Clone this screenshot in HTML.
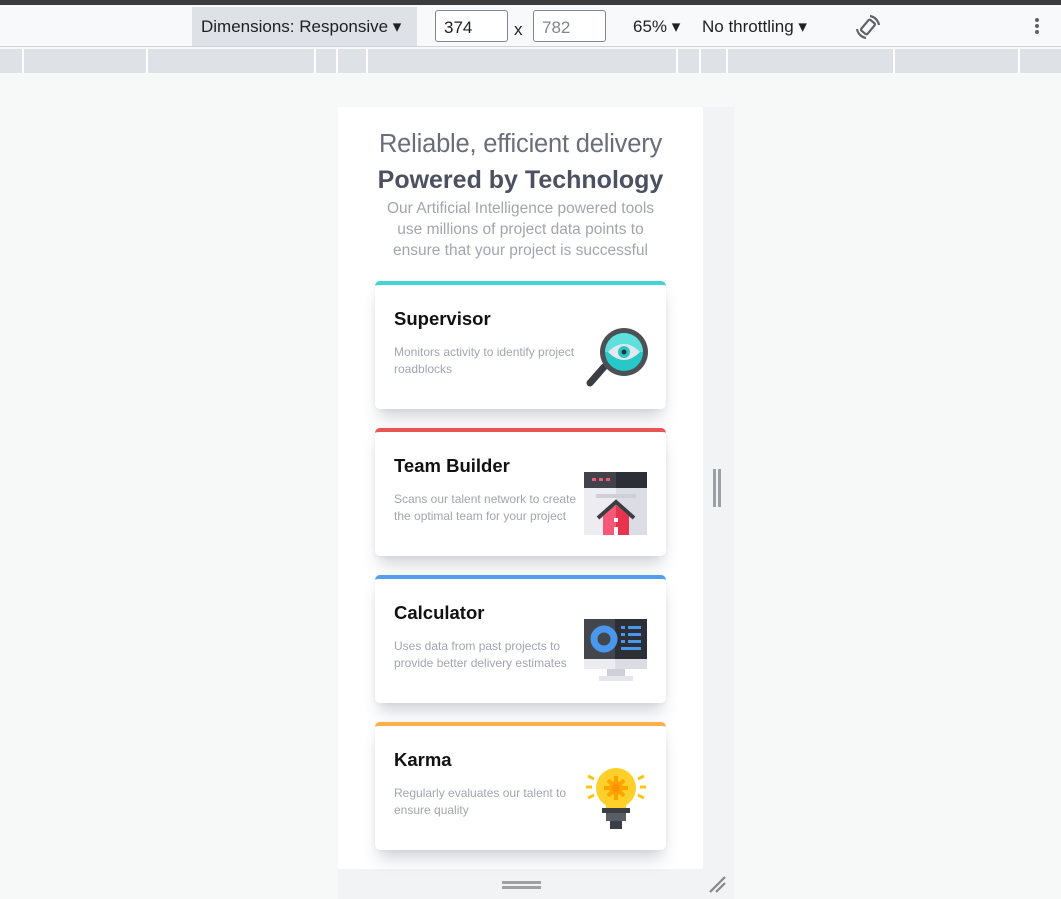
<!DOCTYPE html>
<html><head><meta charset="utf-8"><style>
*{margin:0;padding:0;box-sizing:border-box}
body{width:1061px;height:899px;overflow:hidden;background:#f7f8f8;font-family:"Liberation Sans",sans-serif;position:relative}
.topbar{position:absolute;left:0;top:0;width:1061px;height:5px;background:#3c3c3c}
.tool{position:absolute;left:0;top:5px;width:1061px;height:42px;background:#f8f9fa;border-bottom:1px solid #d0d2d6;font-size:17px;color:#202124}
.tool span{position:absolute;top:12px}
.dim{position:absolute;left:192px;top:2px;width:225px;height:39px;background:#dee1e6}
.inp{position:absolute;top:5px;height:32px;border:1px solid #80868b;border-radius:3px;background:#fff;padding:7px 8px;font-size:17px}
.ruler{position:absolute;left:0;top:49px;width:1061px;height:24px;background:#dee1e6}
.ruler i{position:absolute;top:0;width:2px;height:24px;background:#fff}
.vp{position:absolute;left:338px;top:107px;width:365px;height:762px;background:#fff}
.gut{position:absolute;left:703px;top:107px;width:31px;height:792px;background:#f1f3f4}
.bot{position:absolute;left:338px;top:869px;width:396px;height:30px;background:#f1f3f4}
.vp h2,.vp h1,.vp p.intro{position:absolute;left:0;width:365px;text-align:center;white-space:nowrap}
.vp h2{top:22px;font-weight:normal;font-size:25.5px;line-height:30px;color:#6a6d7a;letter-spacing:-.2px}
.vp h1{top:58px;font-weight:bold;font-size:25px;line-height:30px;color:#4d5061}
.vp p.intro{top:91px;font-size:15.5px;line-height:21px;color:#a3a5ae}
.card{position:absolute;left:37px;width:291px;height:128px;background:#fff;border-radius:5px;border-top:4px solid;box-shadow:0 12px 16px -4px rgba(50,55,80,.22),0 0 6px rgba(0,0,0,.05)}
.card b{position:absolute;left:19px;top:23px;font-size:18.5px;color:#111}
.card p{position:absolute;left:19px;top:59px;width:200px;font-size:12px;line-height:17px;color:#a3a5ae}
.card svg{position:absolute;left:209px;top:40px}
</style></head><body>
<div class="topbar"></div>
<div class="tool">
<div class="dim"></div>
<span style="left:201px">Dimensions: Responsive ▾</span>
<div class="inp" style="left:435px;width:73px">374</div>
<span style="left:514px;top:15px">x</span>
<div class="inp" style="left:533px;width:73px;color:#80868b">782</div>
<span style="left:633px">65% ▾</span>
<span style="left:702px">No throttling ▾</span>
<svg style="position:absolute;left:853px;top:7px" width="30" height="30" viewBox="0 0 30 30"><g fill="none" stroke="#5f6368" stroke-width="2.2"><rect x="11" y="8" width="8" height="14" rx="1.5" transform="rotate(40 15 15)"/><path d="M17 4a11 11 0 0 1 9 9M13 26a11 11 0 0 1-9-9"/></g></svg>
<div style="position:absolute;left:1035px;top:13px;width:4px;height:4px;border-radius:2px;background:#5f6368;box-shadow:0 6px 0 #5f6368,0 12px 0 #5f6368"></div>
</div>
<div class="ruler"><i style="left:22px"></i><i style="left:146px"></i><i style="left:314px"></i><i style="left:336px"></i><i style="left:366px"></i><i style="left:676px"></i><i style="left:699px"></i><i style="left:726px"></i><i style="left:893px"></i><i style="left:1018px"></i></div>
<div class="gut"><div style="position:absolute;left:10px;top:362px;width:3px;height:38px;background:#9aa0a6;box-shadow:5px 0 0 #9aa0a6;"></div></div>
<div class="bot"><div style="position:absolute;left:164px;top:12px;width:39px;height:3px;background:#a0a0a0;box-shadow:0 5px 0 #a0a0a0"></div>
<svg style="position:absolute;left:370px;top:5px" width="20" height="20"><path d="M2 18L17 3M8 18L17 9" stroke="#888" stroke-width="2.2"/></svg></div>
<div class="vp">
<h2>Reliable, efficient delivery</h2>
<h1>Powered by Technology</h1>
<p class="intro">Our Artificial Intelligence powered tools<br>use millions of project data points to<br>ensure that your project is successful</p>
<div class="card" style="top:174px;border-color:#44d3d2"><b>Supervisor</b><p>Monitors activity to identify project roadblocks</p>
<svg width="66" height="66" viewBox="0 0 66 66"><path d="M20 42L6 58" stroke="#3a3d42" stroke-width="7" stroke-linecap="round"/><circle cx="40" cy="27" r="24" fill="#4d5055"/><circle cx="40" cy="27" r="19" fill="#27c8c8"/><path d="M40 8a19 19 0 0 0-19 19h38a19 19 0 0 0-19-19z" fill="#5ee0dc"/><path d="M24 27q16-16 32 0q-16 16-32 0z" fill="#e6e6ee"/><circle cx="40" cy="27" r="6" fill="#27c8c8"/><circle cx="40" cy="27" r="2.5" fill="#333"/></svg></div>
<div class="card" style="top:321px;border-color:#ea5454"><b>Team Builder</b><p>Scans our talent network to create the optimal team for your project</p>
<svg width="66" height="66" viewBox="0 0 66 66"><rect x="0" y="0" width="63" height="63" fill="#dcdce4"/><rect x="0" y="0" width="32" height="63" fill="#ececf1"/><rect x="0" y="0" width="63" height="16" fill="#2c2f36"/><rect x="0" y="0" width="32" height="16" fill="#40434a"/><rect x="8" y="6" width="4" height="3" fill="#f05a78"/><rect x="15" y="6" width="4" height="3" fill="#f05a78"/><rect x="22" y="6" width="4" height="3" fill="#f05a78"/><rect x="12" y="22" width="40" height="4" fill="#cfcfd8"/><path d="M14 46L32 30L50 46" stroke="#3a3d42" stroke-width="4" fill="none"/><path d="M19 44L32 33L45 44V63H19z" fill="#e8334f"/><path d="M19 44L32 33V63H19z" fill="#f6587a"/><rect x="30" y="46" width="4" height="4" fill="#fff"/><rect x="30" y="55" width="4" height="8" fill="#fff"/></svg></div>
<div class="card" style="top:468px;border-color:#549ef2"><b>Calculator</b><p>Uses data from past projects to provide better delivery estimates</p>
<svg width="66" height="66" viewBox="0 0 66 66"><rect x="0" y="0" width="63" height="40" fill="#2c2f36"/><rect x="0" y="0" width="31" height="40" fill="#43464d"/><rect x="0" y="40" width="63" height="10" fill="#dcdce4"/><rect x="0" y="40" width="31" height="10" fill="#ececf1"/><rect x="23" y="50" width="18" height="7" fill="#d0d0da"/><rect x="15" y="57" width="34" height="5" fill="#e6e6ee"/><circle cx="20" cy="20" r="10" fill="none" stroke="#4a98ee" stroke-width="7"/><rect x="37" y="7" width="4" height="3" fill="#4a98ee"/><rect x="44" y="7" width="13" height="3" fill="#4a98ee"/><rect x="37" y="14" width="4" height="3" fill="#4a98ee"/><rect x="44" y="14" width="13" height="3" fill="#4a98ee"/><rect x="37" y="21" width="4" height="3" fill="#4a98ee"/><rect x="44" y="21" width="13" height="3" fill="#4a98ee"/><rect x="37" y="28" width="20" height="3" fill="#4a98ee"/></svg></div>
<div class="card" style="top:615px;border-color:#fcae4a"><b>Karma</b><p>Regularly evaluates our talent to ensure quality</p>
<svg width="66" height="70" viewBox="0 0 66 66"><g stroke="#fcc419" stroke-width="3"><path d="M2 19h6M56 19h6M4 8l6 3M60 8l-6 3M4 30l6-3M60 30l-6-3"/></g><circle cx="32" cy="20" r="20" fill="#ffd02a"/><path d="M22 34h20v8H22z" fill="#ffd02a"/><circle cx="32" cy="20" r="7" fill="#ffa400"/><g stroke="#ffa400" stroke-width="4"><path d="M32 8v24M20 20h24M24 12l16 16M40 12L24 28"/></g><circle cx="32" cy="20" r="4" fill="#ff9000"/><rect x="18" y="40" width="28" height="5" fill="#3b3e44"/><rect x="22" y="45" width="20" height="8" fill="#5a5d63"/><rect x="26" y="53" width="12" height="8" fill="#3b3e44"/></svg></div>
</div>
</body></html>
